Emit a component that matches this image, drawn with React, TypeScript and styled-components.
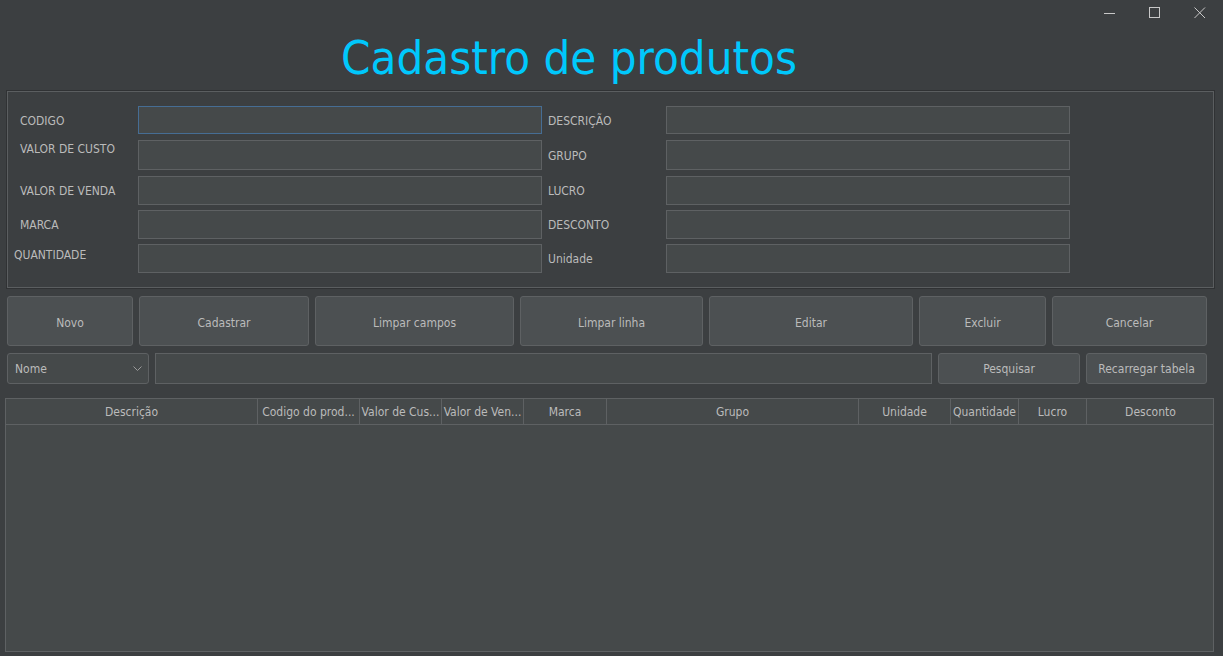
import React from "react";
import styled, { createGlobalStyle } from "styled-components";

const Global = createGlobalStyle`
  html, body { margin: 0; padding: 0; background: #3c3f41; }
  body { font-family: "DejaVu Sans Condensed", "DejaVu Sans", sans-serif; }
  * { box-sizing: border-box; }
`;

const Window = styled.div`
  width: 1223px;
  height: 656px;
  background: #3c3f41;
  color: #bbbbbb;
  font-size: 12px;
  overflow: hidden;
  display: flex;
  flex-direction: column;
`;

const TitleBar = styled.div`
  height: 26px;
  display: flex;
  justify-content: flex-end;
  align-items: flex-start;
  padding-right: 1px;
`;

const CtrlBtn = styled.div`
  width: 45px;
  height: 26px;
  display: flex;
  align-items: center;
  justify-content: center;
`;

const Heading = styled.h1`
  margin: 0;
  height: 65px;
  padding-left: 341px;
  padding-top: 4px;
  font-weight: normal;
  font-size: 47px;
  line-height: 56px;
  color: #00c8fc;
`;

const FormPanel = styled.div`
  margin-left: 7px;
  width: 1207px;
  height: 197px;
  border: 1px solid #5b5e60;
  box-shadow: 0 0 0 1px #303234;
  padding-top: 14px;
  display: grid;
  grid-template-columns: 130px 404px 6px 118px 404px;
  grid-template-rows: 34px 36px 34px 34px 29px;
`;

const Label = styled.div<{ $col: number; $top: number; $indent?: number }>`
  grid-column: ${(p) => p.$col};
  align-self: start;
  line-height: 14px;
  padding-top: ${(p) => p.$top}px;
  padding-left: ${(p) => p.$indent ?? 0}px;
  white-space: nowrap;
`;

const Field = styled.div<{ $col: number; $h: number; $focus?: boolean }>`
  grid-column: ${(p) => p.$col};
  align-self: start;
  height: ${(p) => p.$h}px;
  background: #45494a;
  border: 1px solid ${(p) => (p.$focus ? "#466d94" : "#5e6163")};
`;

const ButtonRow = styled.div`
  display: flex;
  gap: 6px;
  margin: 8px 0 0 7px;
  height: 50px;
`;

const Btn = styled.div<{ $w: number; $drop?: number }>`
  width: ${(p) => p.$w}px;
  flex: none;
  background: #4c5052;
  border: 1px solid #5e6163;
  border-radius: 3px;
  display: flex;
  align-items: center;
  justify-content: center;
  padding-top: ${(p) => p.$drop ?? 0}px;
  white-space: nowrap;
`;

const SearchRow = styled.div`
  display: flex;
  gap: 6px;
  margin: 7px 0 0 7px;
  height: 31px;
`;

const Combo = styled.div`
  width: 142px;
  background: #45494a;
  border: 1px solid #5e6163;
  border-radius: 3px;
  display: flex;
  align-items: center;
  justify-content: space-between;
  padding: 0 6px 0 7px;
`;

const SearchField = styled.div`
  width: 777px;
  background: #45494a;
  border: 1px solid #5e6163;
`;

const Table = styled.div`
  margin: 14px 0 0 5px;
  width: 1209px;
  height: 254px;
  background: #45494a;
  border: 1px solid #5e6163;
  display: flex;
  flex-direction: column;
`;

const HeaderRow = styled.div`
  display: flex;
  height: 26px;
  border-bottom: 1px solid #5e6163;
`;

const HeadCell = styled.div<{ $w: number; $last?: boolean }>`
  width: ${(p) => p.$w}px;
  flex: none;
  border-right: ${(p) => (p.$last ? "none" : "1px solid #5e6163")};
  display: flex;
  align-items: center;
  justify-content: center;
  white-space: nowrap;
  overflow: hidden;
`;

const cols: [string, number][] = [
  ["Descrição", 252],
  ["Codigo do prod...", 102],
  ["Valor de Cus...", 82],
  ["Valor de Ven...", 82],
  ["Marca", 83],
  ["Grupo", 252],
  ["Unidade", 92],
  ["Quantidade", 68],
  ["Lucro", 68],
  ["Desconto", 127],
];

const buttons: [string, number][] = [
  ["Novo", 126],
  ["Cadastrar", 170],
  ["Limpar campos", 199],
  ["Limpar linha", 183],
  ["Editar", 204],
  ["Excluir", 127],
  ["Cancelar", 155],
];

type Row = {
  left: string;
  leftTop: number;
  leftIndent: number;
  right: string;
  rightTop: number;
  h: number;
  focus?: boolean;
};

const rows: Row[] = [
  { left: "CODIGO", leftTop: 8, leftIndent: 12, right: "DESCRIÇÃO", rightTop: 8, h: 28, focus: true },
  { left: "VALOR DE CUSTO", leftTop: 2, leftIndent: 12, right: "GRUPO", rightTop: 9, h: 30 },
  { left: "VALOR DE VENDA", leftTop: 8, leftIndent: 12, right: "LUCRO", rightTop: 8, h: 29 },
  { left: "MARCA", leftTop: 8, leftIndent: 12, right: "DESCONTO", rightTop: 8, h: 29 },
  { left: "QUANTIDADE", leftTop: 4, leftIndent: 6, right: "Unidade", rightTop: 8, h: 29 },
];

export default function App() {
  return (
    <>
      <Global />
      <Window>
        <TitleBar>
          <CtrlBtn>
            <svg width="12" height="12" viewBox="0 0 12 12">
              <line x1="0" y1="6.5" x2="11" y2="6.5" stroke="#c8c8c8" strokeWidth="1" />
            </svg>
          </CtrlBtn>
          <CtrlBtn>
            <svg width="12" height="12" viewBox="0 0 12 12">
              <rect x="0.5" y="0.5" width="10" height="10" fill="none" stroke="#c8c8c8" strokeWidth="1" />
            </svg>
          </CtrlBtn>
          <CtrlBtn>
            <svg width="12" height="12" viewBox="0 0 12 12">
              <path d="M0.5 0.5 L11 11 M11 0.5 L0.5 11" stroke="#c8c8c8" strokeWidth="1" />
            </svg>
          </CtrlBtn>
        </TitleBar>
        <Heading>Cadastro de produtos</Heading>
        <FormPanel>
          {rows.map((r) => (
            <React.Fragment key={r.left}>
              <Label $col={1} $top={r.leftTop} $indent={r.leftIndent}>{r.left}</Label>
              <Field $col={2} $h={r.h} $focus={r.focus} />
              <Label $col={4} $top={r.rightTop}>{r.right}</Label>
              <Field $col={5} $h={r.h} />
            </React.Fragment>
          ))}
        </FormPanel>
        <ButtonRow>
          {buttons.map(([t, w]) => (
            <Btn key={t} $w={w} $drop={3}>{t}</Btn>
          ))}
        </ButtonRow>
        <SearchRow>
          <Combo>
            <span>Nome</span>
            <svg width="9" height="6" viewBox="0 0 9 6">
              <path d="M0.5 0.5 L4.5 4.5 L8.5 0.5" fill="none" stroke="#9a9a9a" strokeWidth="1" />
            </svg>
          </Combo>
          <SearchField />
          <Btn $w={142}>Pesquisar</Btn>
          <Btn $w={121}>Recarregar tabela</Btn>
        </SearchRow>
        <Table>
          <HeaderRow>
            {cols.map(([t, w], i) => (
              <HeadCell key={t} $w={w} $last={i === cols.length - 1}>{t}</HeadCell>
            ))}
          </HeaderRow>
        </Table>
      </Window>
    </>
  );
}
